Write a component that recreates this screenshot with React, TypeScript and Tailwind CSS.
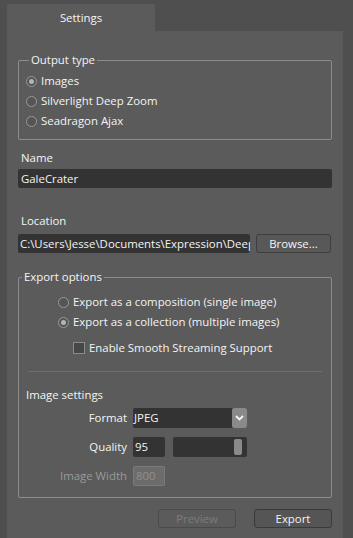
import React from "react";

const font = { fontFamily: '"Open Sans", "Noto Sans", sans-serif' };

function Radio({ checked, label }: { checked?: boolean; label: string }) {
  return (
    <label className="flex items-center gap-[4px] h-[20px] text-[11.4px] text-[#f4f4f4]">
      <span className="w-[11px] h-[11px] rounded-full border border-[#9a9a9a] bg-[#555] flex items-center justify-center">
        {checked && <span className="w-[5px] h-[5px] rounded-full bg-[#b4b4b4]" />}
      </span>
      <span>{label}</span>
    </label>
  );
}

function Group({ title, className, children }: { title: string; className?: string; children: React.ReactNode }) {
  return (
    <fieldset className={`border border-[#8c8c8c] rounded-[2px] ${className ?? ""}`}>
      <legend className="ml-[3px] px-[2px] text-[11.4px] text-[#f4f4f4] leading-[14px]">{title}</legend>
      {children}
    </fieldset>
  );
}

export default function App() {
  return (
    <div className="w-[353px] h-[538px] bg-[#4f4f4f] pt-[4px] pl-[7px] pr-[10px] flex flex-col select-none" style={font}>
      <div className="w-[148px] h-[27px] bg-[#5b5b5b] rounded-t-[2px] flex items-center justify-center text-[11.4px] text-[#f4f4f4]">
        Settings
      </div>
      <div className="flex-1 bg-[#5b5b5b] pl-[11px] pr-[11px] pt-[22px]">
        <Group title="Output type" className="h-[87px] pl-[7px] pt-[4px]">
          <Radio checked label="Images" />
          <Radio label="Silverlight Deep Zoom" />
          <Radio label="Seadragon Ajax" />
        </Group>

        <div className="mt-[10px] pl-[3px] text-[11.4px] text-[#f4f4f4] leading-[16px]">Name</div>
        <div className="mt-[3px] h-[19px] bg-[#333333] rounded-[2px] pl-[3px] flex items-center text-[11.4px] text-[#f4f4f4]">
          GaleCrater
        </div>

        <div className="mt-[25px] pl-[3px] text-[11.4px] text-[#f4f4f4] leading-[16px]">Location</div>
        <div className="mt-[5px] flex gap-[6px]">
          <div className="w-[232px] h-[19px] bg-[#333333] rounded-[2px] pl-[2px] flex items-center text-[11.4px] text-[#f4f4f4] overflow-hidden whitespace-nowrap">
            C:\Users\Jesse\Documents\Expression\Deep Zoom
          </div>
          <button className="w-[75px] h-[19px] rounded-[3px] border border-[#3e3e3e] bg-[#585858] text-[11.4px] text-[#f4f4f4] flex items-center justify-center">
            Browse...
          </button>
        </div>

        <Group title="Export options" className="mt-[17px] h-[228px]">
          <div className="pl-[39px] pt-[8px]">
            <Radio label="Export as a composition (single image)" />
            <Radio checked label="Export as a collection (multiple images)" />
            <label className="mt-[6px] ml-[15px] flex items-center gap-[4px] h-[20px] text-[11.4px] text-[#f4f4f4]">
              <span className="w-[12px] h-[12px] border border-[#8a8a8a] bg-[#474747]" />
              <span>Enable Smooth Streaming Support</span>
            </label>
          </div>
          <div className="mt-[13px] mx-[9px] border-t border-[#6e6e6e]" />
          <div className="mt-[15px] pl-[7px] text-[11.4px] text-[#f4f4f4] leading-[16px]">Image settings</div>
          <div className="mt-[5px] grid grid-cols-[108px_auto] gap-x-[6px] gap-y-[9px] items-center">
            <div className="text-right text-[11.4px] text-[#f4f4f4]">Format</div>
            <div className="w-[114px] h-[20px] bg-[#333333] rounded-[2px] flex items-center justify-between pl-[1px]">
              <span className="text-[11.4px] text-[#f4f4f4]">JPEG</span>
              <span className="w-[15px] h-[20px] bg-[#8a8a8a] rounded-[2px] flex items-center justify-center">
                <svg width="9" height="6" viewBox="0 0 9 6">
                  <path d="M1 1l3.5 3.5L8 1" fill="none" stroke="#f4f4f4" strokeWidth="1.8" />
                </svg>
              </span>
            </div>
            <div className="text-right text-[11.4px] text-[#f4f4f4]">Quality</div>
            <div className="flex gap-[8px]">
              <div className="w-[32px] h-[20px] bg-[#333333] rounded-[2px] pl-[2px] flex items-center text-[11.4px] text-[#f4f4f4]">95</div>
              <div className="w-[74px] h-[20px] bg-[#333333] rounded-[2px] flex items-center justify-end pr-[5px]">
                <span className="w-[8px] h-[16px] rounded-[2px] bg-[#8a8a8a]" />
              </div>
            </div>
            <div className="text-right text-[11.4px] text-[#9a9a9a]">Image Width</div>
            <div className="w-[32px] h-[20px] bg-[#6c6c6c] rounded-[2px] border border-[#7a7a7a] pl-[2px] flex items-center text-[11.4px] text-[#8f8f8f]">800</div>
          </div>
        </Group>

        <div className="mt-[11px] flex justify-end gap-[18px]">
          <button className="w-[78px] h-[19px] rounded-[3px] border border-[#4a4a4a] bg-[#5b5b5b] text-[11.4px] text-[#7c7c7c] flex items-center justify-center">
            Preview
          </button>
          <button className="w-[78px] h-[19px] rounded-[3px] border border-[#3a3a3a] bg-[#555555] text-[11.4px] text-[#f4f4f4] flex items-center justify-center">
            Export
          </button>
        </div>
      </div>
    </div>
  );
}
